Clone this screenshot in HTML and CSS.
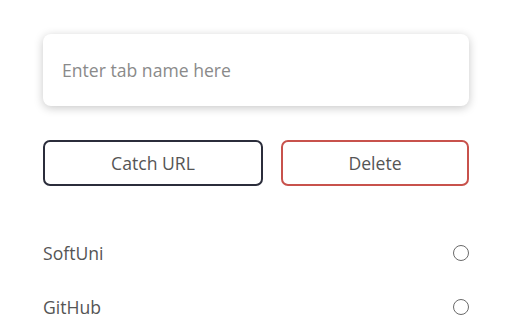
FILE: index.html
```html
<!DOCTYPE html>
<html>
<head>
<meta charset="utf-8">
<link rel="stylesheet" href="styles.css">
</head>
<body>
<div class="app">
  <input class="tab-input" type="text" placeholder="Enter tab name here">
  <div class="actions">
    <button class="btn btn-catch">Catch URL</button>
    <button class="btn btn-delete">Delete</button>
  </div>
  <ul class="tabs">
    <li class="tab"><span class="tab-name">SoftUni</span><span class="radio"></span></li>
    <li class="tab"><span class="tab-name">GitHub</span><span class="radio"></span></li>
  </ul>
</div>
</body>
</html>
```
FILE: styles.css
```css
html, body {
  margin: 0;
  padding: 0;
  background: #ffffff;
  overflow: hidden;
}
body {
  font-family: "Open Sans", "Noto Sans", sans-serif;
  color: #555555;
}
.app {
  width: 426px;
  margin-left: 43px;
  padding-top: 34px;
}
.tab-input {
  display: block;
  box-sizing: border-box;
  width: 426px;
  height: 72px;
  border: none;
  border-radius: 8px;
  padding: 0 19px;
  font-family: inherit;
  font-size: 17.6px;
  color: #555;
  box-shadow: 0 2px 10px rgba(0, 0, 0, 0.22);
  outline: none;
  background: #fff;
}
.tab-input::placeholder {
  color: #8a8a8a;
}
.actions {
  display: flex;
  gap: 18px;
  margin-top: 34px;
}
.btn {
  box-sizing: border-box;
  height: 46px;
  border-radius: 7px;
  background: #fff;
  font-family: inherit;
  font-size: 17.6px;
  color: #555;
  padding: 0;
}
.btn-catch {
  width: 220px;
  border: 2px solid #2b2d3b;
}
.btn-delete {
  width: 188px;
  border: 2px solid #c8524c;
}
.tabs {
  list-style: none;
  margin: 40px 0 0;
  padding: 0;
}
.tab {
  display: flex;
  align-items: center;
  justify-content: space-between;
  height: 54px;
  font-size: 17.6px;
  color: #555;
}
.radio {
  box-sizing: border-box;
  width: 16px;
  height: 16px;
  border: 1.3px solid #6a6a6a;
  border-radius: 50%;
  margin-right: 0;
}
```
